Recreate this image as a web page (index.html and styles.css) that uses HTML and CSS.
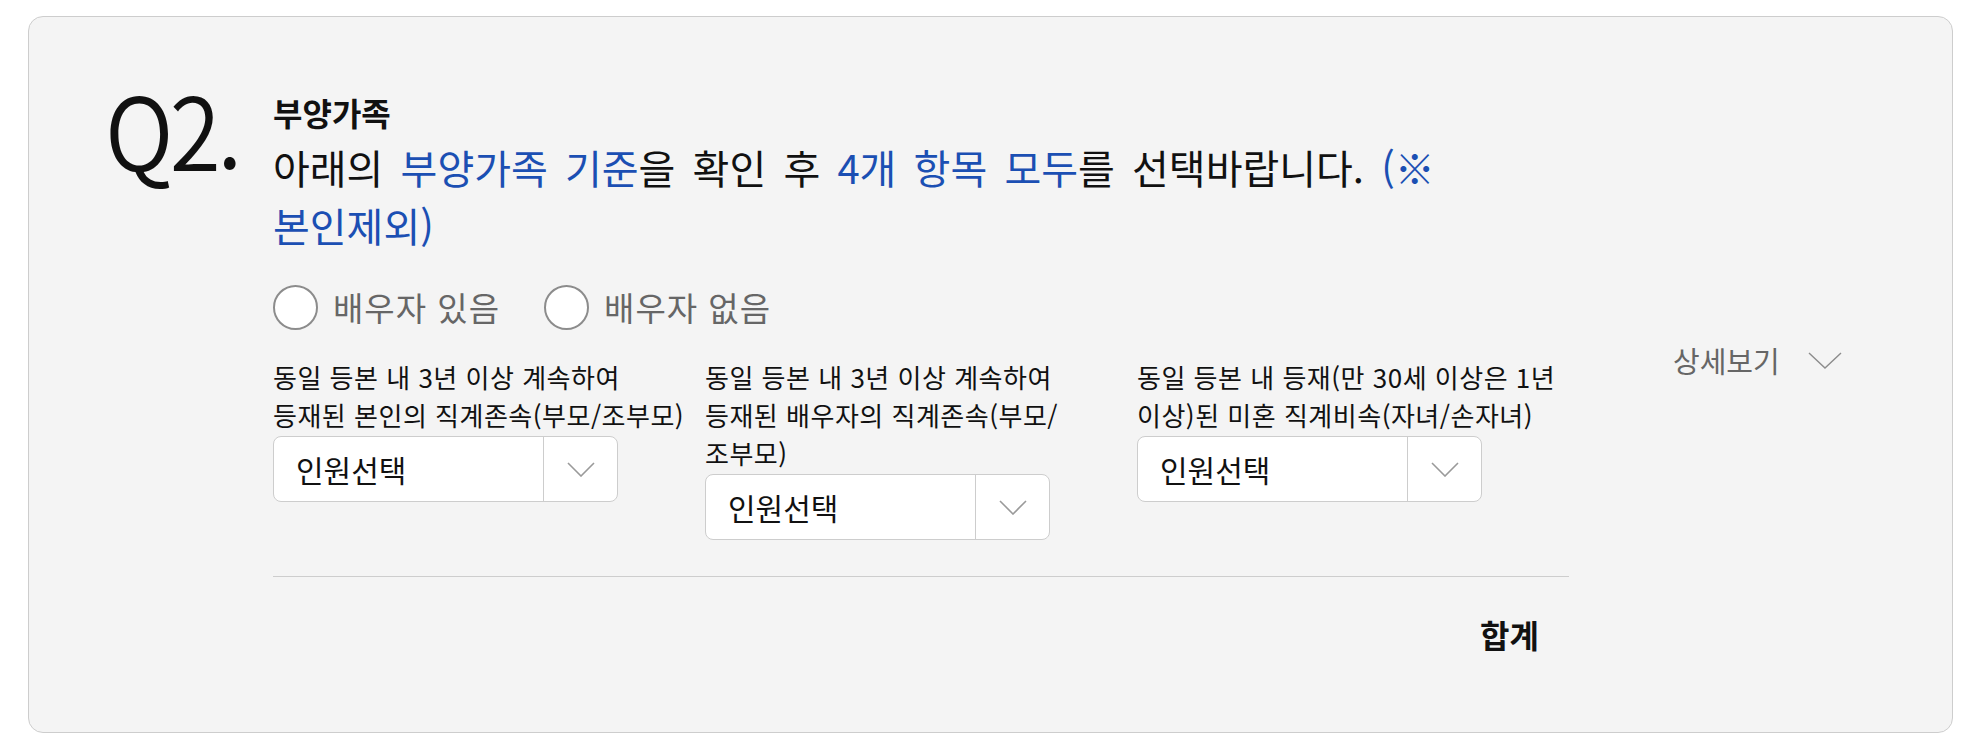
FILE: index.html
```html
<!DOCTYPE html>
<html lang="ko">
<head>
    <meta charset="UTF-8">
    <meta name="viewport" content="width=device-width, initial-scale=1.0">
    <title>부양가족</title>
    <link rel="stylesheet" href="styles.css">
</head>
<body>
    <div class="card">
        <div class="q-num"><span>Q2.</span></div>

        <div class="q-body">
            <p class="q-title">부양가족</p>
            <p class="q-desc">아래의 <span class="hl">부양가족 기준</span>을 확인 후 <span class="hl">4개 항목 모두</span>를 선택바랍니다. <span class="hl">(※ 본인제외)</span></p>

            <div class="radios">
                <label class="radio"><input type="radio" name="spouse"><span class="dot"></span>배우자 있음</label>
                <label class="radio"><input type="radio" name="spouse"><span class="dot"></span>배우자 없음</label>
            </div>

            <div class="fields">
                <div class="field">
                    <p class="field-label">동일 등본 내 3년 이상 계속하여 등재된 본인의 직계존속(부모/조부모)</p>
                    <div class="pick">
                        <span class="pick-text">인원선택</span>
                        <span class="pick-arrow">
                            <svg width="28" height="15" viewBox="0 0 28 15"><path d="M1 1 L14 14 L27 1" fill="none" stroke="#9a9a9a" stroke-width="1.6"/></svg>
                        </span>
                    </div>
                </div>
                <div class="field">
                    <p class="field-label">동일 등본 내 3년 이상 계속하여 등재된 배우자의 직계존속(부모/조부모)</p>
                    <div class="pick">
                        <span class="pick-text">인원선택</span>
                        <span class="pick-arrow">
                            <svg width="28" height="15" viewBox="0 0 28 15"><path d="M1 1 L14 14 L27 1" fill="none" stroke="#9a9a9a" stroke-width="1.6"/></svg>
                        </span>
                    </div>
                </div>
                <div class="field">
                    <p class="field-label">동일 등본 내 등재(만 30세 이상은 1년 이상)된 미혼 직계비속(자녀/손자녀)</p>
                    <div class="pick">
                        <span class="pick-text">인원선택</span>
                        <span class="pick-arrow">
                            <svg width="28" height="15" viewBox="0 0 28 15"><path d="M1 1 L14 14 L27 1" fill="none" stroke="#9a9a9a" stroke-width="1.6"/></svg>
                        </span>
                    </div>
                </div>
            </div>

            <div class="total">합계</div>
        </div>

        <div class="detail">
            상세보기
            <svg width="34" height="17" viewBox="0 0 34 17"><path d="M1 1 L17 16 L33 1" fill="none" stroke="#8c8c8c" stroke-width="1.4"/></svg>
        </div>
    </div>
</body>
</html>
```

FILE: styles.css
```css
body {
    margin: 0;
    padding: 16px 22px 0 28px;
    background: #fff;
    font-family: "Noto Sans CJK KR", "Noto Sans", sans-serif;
    color: #111;
}

p {
    margin: 0;
}

.card {
    display: flex;
    align-items: flex-start;
    height: 717px;
    box-sizing: border-box;
    padding: 60px 0 0 76px;
    background: #f4f4f4;
    border: 1px solid #cdcdcd;
    border-radius: 15px;
}

/* question number */
.q-num {
    width: 168px;
    flex: none;
    font-size: 101px;
    font-weight: 350;
    line-height: 101px;
    letter-spacing: -4px;
}

.q-num span {
    display: inline-block;
    transform: scaleX(0.92);
    transform-origin: left center;
}

.q-body {
    width: 1296px;
    flex: none;
    padding-top: 12px;
}

.q-title {
    font-size: 32px;
    font-weight: 700;
    line-height: 46px;
}

.q-desc {
    margin-top: 3px;
    font-size: 40px;
    line-height: 58px;
    word-spacing: 6px;
    word-break: keep-all;
}

.hl {
    color: #1b4fb3;
}

/* radios */
.radios {
    display: flex;
    gap: 44px;
    margin-top: 29px;
}

.radio {
    display: flex;
    align-items: center;
    gap: 15px;
    font-size: 33px;
    line-height: 48px;
    letter-spacing: 1px;
    color: #666;
}

.radio input {
    display: none;
}

.dot {
    width: 45px;
    height: 45px;
    box-sizing: border-box;
    border: 2px solid #8c8c8c;
    border-radius: 50%;
    background: #fff;
}

/* selects */
.fields {
    display: grid;
    grid-template-columns: repeat(3, 1fr);
    align-items: start;
    margin-top: 27px;
    padding-bottom: 36px;
    border-bottom: 1px solid #cdcdcd;
}

.field {
    padding-right: 12px;
}

.field-label {
    font-size: 26px;
    line-height: 38px;
    letter-spacing: 0.5px;
    word-break: keep-all;
    color: #111;
}

.pick {
    display: flex;
    width: 345px;
    height: 66px;
    margin-top: 2px;
    box-sizing: border-box;
    background: #fff;
    border: 1px solid #cdcdcd;
    border-radius: 8px;
}

.pick-text {
    flex: 1;
    padding-left: 22px;
    font-size: 30px;
    line-height: 64px;
}

.pick-arrow {
    display: flex;
    align-items: center;
    justify-content: center;
    width: 73px;
    border-left: 1px solid #cdcdcd;
}

.total {
    margin-top: 34px;
    padding-right: 30px;
    text-align: right;
    font-size: 32px;
    font-weight: 700;
    line-height: 46px;
}

/* right side link */
.detail {
    display: flex;
    align-items: center;
    gap: 28px;
    margin: 262px 0 0 104px;
    font-size: 29px;
    line-height: 42px;
    color: #666;
}
```
